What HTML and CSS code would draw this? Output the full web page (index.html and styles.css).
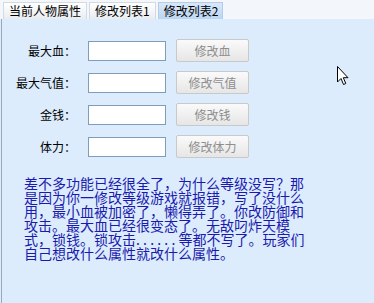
FILE: index.html
```html
<!DOCTYPE html>
<html lang="zh-CN">

<head>
    <meta charset="UTF-8">
    <meta name="viewport" content="width=device-width, initial-scale=1.0">
    <title>修改器</title>
    <link rel="stylesheet" href="styles.css">
</head>

<body>
    <div class="window">
        <div class="tabs">
            <div class="tab">当前人物属性</div>
            <div class="tab">修改列表1</div>
            <div class="tab active">修改列表2</div>
        </div>
        <div class="panel">
            <div class="form">
                <label class="label">最大血：</label>
                <input class="field" type="text">
                <button class="btn" disabled>修改血</button>

                <label class="label">最大气值：</label>
                <input class="field" type="text">
                <button class="btn" disabled>修改气值</button>

                <label class="label">金钱：</label>
                <input class="field" type="text">
                <button class="btn" disabled>修改钱</button>

                <label class="label">体力：</label>
                <input class="field" type="text">
                <button class="btn" disabled>修改体力</button>
            </div>
            <p class="note">差不多功能已经很全了，为什么等级没写？那是因为你一修改等级游戏就报错，写了没什么用，最小血被加密了，懒得弄了。你改防御和攻击。最大血已经很变态了。无敌叼炸天模式，锁钱。锁攻击<span class="dots">......</span>等都不写了。玩家们自己想改什么属性就改什么属性。</p>
        </div>
        <svg class="cursor" width="13" height="20" viewBox="0 0 13 20">
            <path d="M0.5 0.5 L0.5 16 L4 12.5 L6.5 18.5 L8.8 17.5 L6.3 11.7 L11 11.7 Z" fill="#fff" stroke="#000" stroke-width="1" stroke-linejoin="miter"/>
        </svg>
    </div>
</body>

</html>
```

FILE: styles.css
```css
body {
    margin: 0;
    font-family: "Noto Sans CJK SC", "Liberation Sans", sans-serif;
    font-size: 12px;
    background: #dcecfc;
}

.window {
    position: relative;
    width: 374px;
    height: 303px;
    overflow: hidden;
    background: #dcecfc;
}

.tabs {
    display: flex;
    gap: 2px;
    height: 19px;
    padding: 2px 0 0 3px;
    box-sizing: border-box;
    background: #f3f7fc;
}

.tab {
    height: 16px;
    line-height: 16px;
    padding: 0 5px;
    color: #000;
    background: linear-gradient(#ffffff, #e9ecf0);
    border: 1px solid #d4dae2;
    border-bottom: none;
}

.tab.active {
    padding: 0 4px 0 5px;
    background: linear-gradient(#d8e8fa, #bcd6f2);
    border-color: #b4cce8;
}

.panel {
    height: 284px;
    border-left: 1px solid #9aa8b8;
    margin-left: 1px;
}

.form {
    display: grid;
    grid-template-columns: 86px 78px 73px;
    grid-auto-rows: 23px;
    row-gap: 9px;
    align-items: center;
    padding-top: 20px;
}

.label {
    text-align: right;
    padding-right: 12px;
    color: #000;
}

.field {
    width: 78px;
    height: 20px;
    box-sizing: border-box;
    margin: 0;
    border: 1px solid #7f9db9;
    background: #fff;
    outline: none;
}

.btn {
    width: 73px;
    height: 23px;
    margin-left: 10px;
    box-sizing: border-box;
    font-family: inherit;
    font-size: 12px;
    color: #8e8e8e;
    background: linear-gradient(#fafafa, #e6e6e6);
    border: 1px solid #c9c9c9;
    border-radius: 2px;
    padding: 0;
}

.note {
    width: 284px;
    margin: 18px 0 0 22px;
    font-size: 14px;
    line-height: 14px;
    color: #1a1aae;
}

.dots {
    letter-spacing: 3.2px;
}

.cursor {
    position: absolute;
    left: 337px;
    top: 66px;
}
```
